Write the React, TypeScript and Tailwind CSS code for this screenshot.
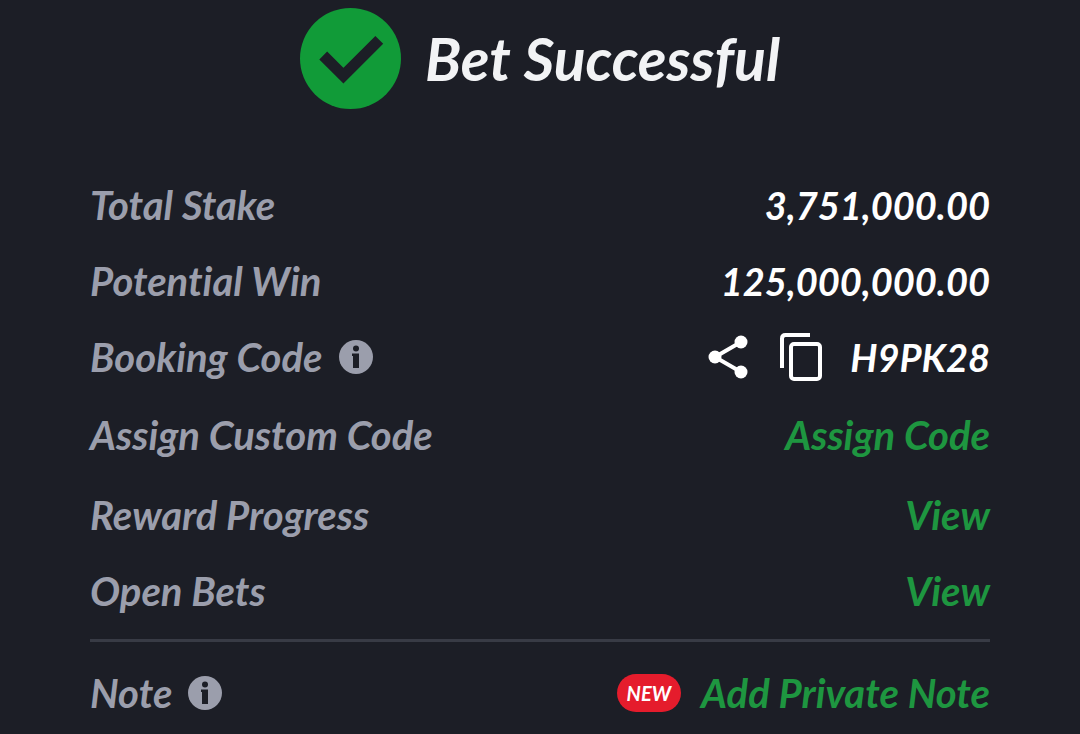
import React from 'react';

const InfoIcon = () => (
  <svg viewBox="0 0 34 34" className="h-[34px] w-[34px]" aria-hidden="true">
    <circle cx="17" cy="17" r="17" fill="#9b9eac" />
    <circle cx="17" cy="8.5" r="3" fill="#1c1e26" />
    <path d="M13 13.500h7v14.500h-6v-12h-1z" fill="#1c1e26" />
  </svg>
);

const ShareIcon = () => (
  <svg viewBox="0 0 40 44" className="h-[44px] w-[40px]" aria-hidden="true">
    <path d="M33 7 7 22l26 15" fill="none" stroke="#fff" strokeWidth="4" />
    <circle cx="33" cy="7" r="6.5" fill="#fff" />
    <circle cx="7" cy="22" r="6.5" fill="#fff" />
    <circle cx="33" cy="37" r="6.5" fill="#fff" />
  </svg>
);

const CopyIcon = () => (
  <svg viewBox="0 0 42 48" className="h-12 w-[42px]" fill="none" stroke="#fff" strokeWidth="4" aria-hidden="true">
    <path d="M30 2H5.500Q2 2 2 5.500V35" />
    <rect x="11" y="11" width="29" height="35" rx="3" />
  </svg>
);

type RowProps = {
  label: string;
  info?: boolean;
  className: string;
  children: React.ReactNode;
};

const Row = ({ label, info, className, children }: RowProps) => (
  <div className={`flex items-center justify-between ${className}`}>
    <dt className="flex items-center gap-4 text-[#9b9eac]">
      <span>{label}</span>
      {info && (
        <button type="button" aria-label={`About ${label}`}>
          <InfoIcon />
        </button>
      )}
    </dt>
    <dd className="flex items-center text-white">{children}</dd>
  </div>
);

const App = () => {
  return (
    <main className="min-h-screen bg-[#1c1e26] px-[90px] pt-2 font-['Lato',sans-serif] text-[40px] leading-[44px] font-bold whitespace-nowrap italic [font-variant-ligatures:none]">
      {/* Header */}
      <header className="flex items-center justify-center gap-6 pb-[58px]">
        <svg viewBox="0 0 100 100" className="h-[101px] w-[101px]" aria-hidden="true">
          <circle cx="50" cy="50" r="50" fill="#119b38" />
          <path d="m23 47 20 20 35.500-35.500" fill="none" stroke="#1c1e26" strokeWidth="11" />
        </svg>
        <h1 className="text-[59px] leading-[64px] text-[#f2f3f5]">Bet Successful</h1>
      </header>

      {/* Bet details */}
      <dl>
        <Row label="Total Stake" className="h-19">
          <span className="text-[38px]">3,751,000.00</span>
        </Row>
        <Row label="Potential Win" className="h-19">
          <span className="text-[38px]">125,000,000.00</span>
        </Row>
        <Row label="Booking Code" info className="h-19">
          <button type="button" aria-label="Share booking code">
            <ShareIcon />
          </button>
          <button type="button" aria-label="Copy booking code" className="mr-7 ml-8">
            <CopyIcon />
          </button>
          <span className="text-[38px]">H9PK28</span>
        </Row>
        <Row label="Assign Custom Code" className="h-20">
          <a href="#" className="text-[#1e9640]">Assign Code</a>
        </Row>
        <Row label="Reward Progress" className="h-20">
          <a href="#" className="text-[#1e9640]">View</a>
        </Row>
        <Row label="Open Bets" className="h-18">
          <a href="#" className="text-[#1e9640]">View</a>
        </Row>
        <Row label="Note" info className="mt-3 h-[104px] border-t-3 border-[#383b45]">
          <span className="mr-5 rounded-full bg-[#e51c2c] px-[10px] text-[20px] leading-[38px]">NEW</span>
          <a href="#" className="text-[#1e9640]">Add Private Note</a>
        </Row>
      </dl>
    </main>
  );
};

export default App;
